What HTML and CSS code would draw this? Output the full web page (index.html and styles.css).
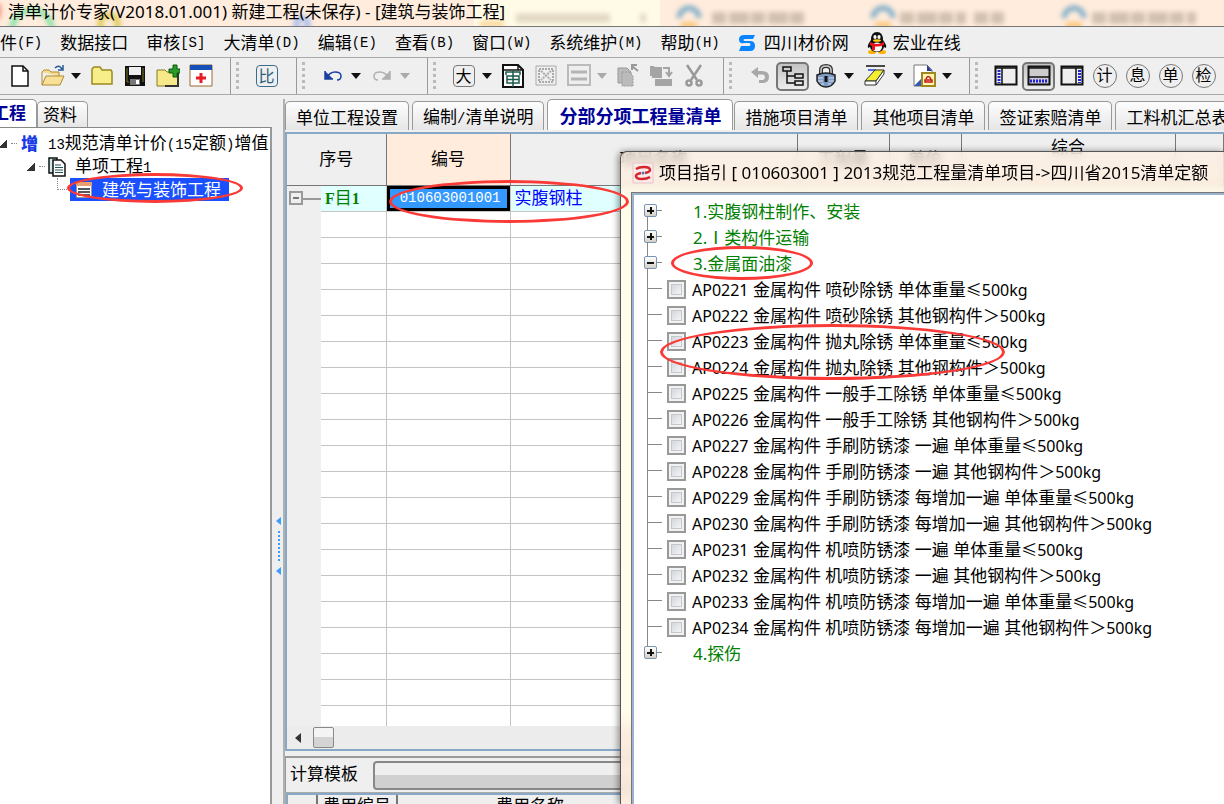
FILE: index.html
```html
<!DOCTYPE html>
<html lang="zh-CN">
<head>
<meta charset="utf-8">
<title>清单计价专家</title>
<link rel="stylesheet" href="styles.css">
</head>
<body>
<div class="app">
  <header class="titlebar">
    <svg class="titlebar-glass" height="26" width="1224" aria-hidden="true">
      <defs><filter id="soft"><feGaussianBlur stdDeviation="2.5"/></filter></defs>
      <rect x="474" width="186" height="26" fill="#fffbe6"/>
      <g filter="url(#soft)" fill="none" stroke-width="5">
        <path d="M-2 4v14" stroke="#f08070"/>
        <path d="M12 30a20 20 0 0 1 40 0" stroke="#7be0a0"/>
        <circle cx="109" cy="24" r="9" stroke="#dcc84a"/>
        <circle cx="302" cy="24" r="6" stroke="#9db9f0"/>
        <path d="M480 24h24" stroke="#fbd08a"/>
        <path d="M516 18h94M640 18h6" stroke="#e2d8c4" stroke-width="9"/>
        <path d="M679 18a10 10 0 0 1 20 0M873 18a10 10 0 0 1 20 0M1064 18a10 10 0 0 1 20 0" stroke="#7bacc8"/>
        <path d="M681 25h16M875 25h16M1066 25h16" stroke="#fbbf68"/>
        <path d="M712 18h92M900 18h66M974 18h30M1092 18h104" stroke="#d2c0b0" stroke-width="12" stroke-dasharray="14 3 20 2"/>
      </g>
    </svg>
    <h1>清单计价专家(V2018.01.001) 新建工程(未保存) - [建筑与装饰工程]</h1>
  </header>

  <nav class="menubar">
    <button>件<span class="mono">(F)</span></button>
    <button>数据接口</button>
    <button>审核<span class="mono">[S]</span></button>
    <button>大清单<span class="mono">(D)</span></button>
    <button>编辑<span class="mono">(E)</span></button>
    <button>查看<span class="mono">(B)</span></button>
    <button>窗口<span class="mono">(W)</span></button>
    <button>系统维护<span class="mono">(M)</span></button>
    <button>帮助<span class="mono">(H)</span></button>
    <button class="site"><svg width="18" height="18" viewBox="0 0 18 18"><path d="M17 1H6Q1 1 1 5.500T6 9h5q1.500 0 1.500 1.500T11 12H3l-2 5h11q5 0 5-5t-5-5H7Q5.500 7 5.500 6T7 5h8z" fill="#0a84ff"/></svg>四川材价网</button>
    <button class="site"><svg width="20" height="22" viewBox="0 0 20 22"><ellipse cx="5" cy="20" rx="4" ry="2" fill="#ffb000"/><ellipse cx="15" cy="20" rx="4" ry="2" fill="#ffb000"/><path d="M4 8Q4 0 10 0t6 8q4 5 3 8l-2-1q-1 5-7 5t-7-5l-2 1Q0 13 4 8z" fill="#111"/><ellipse cx="10" cy="15" rx="5" ry="4.500" fill="#fff"/><ellipse cx="8" cy="5" rx="1.600" ry="2" fill="#fff"/><ellipse cx="12" cy="5" rx="1.600" ry="2" fill="#fff"/><ellipse cx="10" cy="8.500" rx="4" ry="1.300" fill="#ffd000"/><path d="M3 10q7 4 14 0v3q-4 2-9 1.500V18H5v-4l-2-1z" fill="#e8141c"/></svg>宏业在线</button>
  </nav>

  <div class="toolbar" role="toolbar" aria-label="工具栏">
    <div class="group first">
      <button class="tool" aria-label="新建"><svg viewBox="0 0 24 24"><path d="M4 2h11l5 5v15H4z" fill="#fff" stroke="#111" stroke-width="1.500"/><path d="M15 2v5h5" fill="none" stroke="#111" stroke-width="1.500"/></svg></button>
      <button class="tool" aria-label="打开"><svg viewBox="0 0 24 24"><path d="M1 8l2-2h5l2 2h8v4" fill="#f6dc8c" stroke="#b08a30"/><path d="M1 8v13l4-9h18l-4 9H1" fill="#f8e098" stroke="#b08a30"/><path d="M14 4q4-4 7 1m1-4v5h-5" fill="none" stroke="#2a5a98" stroke-width="1.500"/></svg></button>
      <button class="drop" aria-label="打开选项"></button>
      <button class="tool" aria-label="文件夹"><svg viewBox="0 0 24 24"><path d="M2 20V5l2-2h6l2 3h9l1 2v12z" fill="#f7ee8a" stroke="#9a8a20" stroke-width="1.500"/></svg></button>
      <button class="tool" aria-label="保存"><svg viewBox="0 0 24 24"><path d="M2 2h20v20H2z" fill="#111"/><path d="M4 4v14h2M20 4v14" stroke="#7a7a20" fill="none"/><path d="M6 3h12v8H6z" fill="#eee"/><path d="M7 15h10v6H7z" fill="#777"/><path d="M13 16h3v4h-3z" fill="#fff"/></svg></button>
      <button class="tool" aria-label="添加工程"><svg viewBox="0 0 24 24"><path d="M1 6h8l2 2h11v14H1z" fill="#f7e88a" stroke="#8a7a20"/><path d="M22 9v13H9" fill="none" stroke="#333" stroke-width="2"/><path d="M17 1h4v4h3v4h-3v4h-4V9h-4V5h4z" fill="#2a9a2a" stroke="#0a5a0a"/></svg></button>
      <button class="tool" aria-label="导入"><svg viewBox="0 0 24 24"><path d="M1 1h22v21H1z" fill="#fff" stroke="#9a6a2a"/><path d="M1 1h22v5H1z" fill="#1450b8"/><path d="M10.500 9h3v3.500H17v3h-3.500V19h-3v-3.500H7v-3h3.500z" fill="#e81c24"/></svg></button>
    </div>
    <div class="group"><i class="grip"></i>
      <button class="tool" aria-label="比"><span class="boxed blue">比</span></button>
    </div>
    <div class="group"><i class="grip"></i>
      <button class="tool" aria-label="撤销"><svg viewBox="0 0 24 24"><path d="M4 7v8h8z" fill="#1a40a0"/><path d="M4 7v8h8M5 14Q9 8 14 8q6 0 6 4 0 4-4 4" fill="none" stroke="#1a40a0" stroke-width="1.500"/></svg></button>
      <button class="drop" aria-label="撤销选项"></button>
      <button class="tool" aria-label="重做"><svg viewBox="0 0 24 24"><path d="M20 7v8h-8z" fill="#b0b0b0"/><path d="M20 7v8h-8M19 14Q15 8 10 8q-6 0-6 4 0 4 4 4" fill="none" stroke="#b0b0b0" stroke-width="1.500"/></svg></button>
      <button class="drop off" aria-label="重做选项"></button>
    </div>
    <div class="group"><i class="grip"></i>
      <button class="tool" aria-label="大"><span class="boxed">大</span></button>
      <button class="drop" aria-label="大小选项"></button>
      <button class="tool" aria-label="审核"><svg viewBox="0 0 24 24"><path d="M2 1h15l5 5v17H2z" fill="#fff" stroke="#111" stroke-width="2"/><path d="M3 6h18M17 1v5h5" fill="none" stroke="#111" stroke-width="1.500"/><path d="M5 11V8h14v3M6 12h12v7H6zM6 15.500h12M12 7v16" fill="none" stroke="#1a5a4a" stroke-width="1.500"/></svg></button>
      <button class="tool" aria-label="选框"><svg viewBox="0 0 24 24" fill="none" stroke="#aaa"><path d="M2 2h20v19H2z"/><path d="M5 5h14v13H5z" stroke-dasharray="2 1" stroke-width="2"/><path d="M7 7l10 9M17 7L7 16" stroke-dasharray="2 1" stroke-width="2"/></svg></button>
      <button class="tool" aria-label="行"><svg viewBox="0 0 24 24"><path d="M1 1h22v20H1z" fill="#eee" stroke="#bbb" stroke-width="2"/><path d="M4 8h16M4 15h16" stroke="#b4b4b4" stroke-width="3"/></svg></button>
      <button class="drop off" aria-label="行选项"></button>
      <button class="tool" aria-label="复制"><svg viewBox="0 0 24 24" fill="#bbb" stroke="#999"><path d="M2 4h9l4 4v11H2z"/><path d="M6 8h7l4 4v10H6z" stroke-dasharray="2 1"/><path d="M22 7l-6-5m0 4V1h5" fill="none" stroke-width="2"/></svg></button>
      <button class="tool" aria-label="粘贴"><svg viewBox="0 0 24 24"><path d="M1 2h4l1 1h7v9H1zM6 15h17v7H6z" fill="#a4a4a4"/><path d="M14 4h6v7m-3-3l3 4 3-4M3 13h10" fill="none" stroke="#a4a4a4" stroke-width="2"/></svg></button>
      <button class="tool" aria-label="剪切"><svg viewBox="0 0 24 24" fill="none" stroke="#999" stroke-width="2.500"><path d="M5 1l10 15M19 1L9 16"/><circle cx="7" cy="19" r="2.500"/><circle cx="17" cy="19" r="2.500"/></svg></button>
    </div>
    <div class="group"><i class="grip"></i>
      <button class="tool" aria-label="返回"><svg viewBox="0 0 24 24"><path d="M10 3v4h4q7 0 7 6t-7 6h-3v-3h3q3 0 3-3t-3-2.500h-4V14L3 8z" fill="#a8a8a8"/></svg></button>
      <button class="tool pressed" aria-label="树状"><svg viewBox="0 0 24 24" fill="none" stroke="#111" stroke-width="1.500"><path d="M2 3h8v4H2zM14 10h8v4h-8zM14 17h8v4h-8zM6 7v12h8M6 12h8"/></svg></button>
      <button class="tool" aria-label="锁定"><svg viewBox="0 0 24 24"><path d="M7 10V6q0-4 5-4t5 4v4" fill="none" stroke="#333" stroke-width="4"/><path d="M7 10V6q0-4 5-4t5 4v4" fill="none" stroke="#ccc" stroke-width="1.500"/><path d="M3 11q9-4 18 0v6q-3 6-9 6t-9-6z" fill="#7d9cc4" stroke="#222" stroke-width="1.500"/><path d="M4 14h5M15 14h5M4 17h5M15 17h5M7 20h3M14 20h3" stroke="#dde"/><path d="M12 12v6" stroke="#111" stroke-width="3"/></svg></button>
      <button class="drop" aria-label="锁定选项"></button>
      <button class="tool" aria-label="清除"><svg viewBox="0 0 24 24"><path d="M3 2h19" stroke="#111" stroke-width="1.500"/><path d="M5 6h8" stroke="#24c" stroke-width="1.500"/><path d="M12 6h9l-8 11H2z" fill="#f4f030" stroke="#333"/><path d="M2 17h11v4H2zM13 17l8-11v4l-8 11" fill="#fff" stroke="#333"/></svg></button>
      <button class="drop" aria-label="清除选项"></button>
      <button class="tool" aria-label="文档"><svg viewBox="0 0 24 24"><path d="M2 1h13l5 5v16H2z" fill="#fff" stroke="#777"/><path d="M15 1v6h5z" fill="#2a3a9a"/><path d="M2 22l8-8v8z" fill="#345ab0"/><path d="M10 9h13v13H10z" fill="#fff6b0" stroke="#a08820" stroke-width="2"/><path d="M13 18v-2h7v2zM14 15q2-5 5 0" fill="none" stroke="#c01818" stroke-width="1.500"/></svg></button>
      <button class="drop" aria-label="文档选项"></button>
    </div>
    <div class="group last"><i class="grip"></i>
      <button class="tool" aria-label="左侧面板"><svg viewBox="0 0 24 24"><path d="M1.500 2.500h21v18h-21z" fill="#eee" stroke="#111" stroke-width="2"/><path d="M1 4h22M8 4v16" stroke="#111" stroke-width="1.500"/><path d="M5 6v13" stroke="#22d" stroke-width="3" stroke-dasharray="2 1"/></svg></button>
      <button class="tool pressed" aria-label="底部面板"><svg viewBox="0 0 24 24"><path d="M1.500 2.500h21v18h-21z" fill="#ccc" stroke="#111" stroke-width="2"/><path d="M1 4h22M1 13h22" stroke="#111" stroke-width="1.500"/><path d="M3 17h18" stroke="#22d" stroke-width="3" stroke-dasharray="2 1"/></svg></button>
      <button class="tool" aria-label="右侧面板"><svg viewBox="0 0 24 24"><path d="M1.500 2.500h21v18h-21z" fill="#eee" stroke="#111" stroke-width="2"/><path d="M1 4h22M16 4v16" stroke="#111" stroke-width="1.500"/><path d="M19.500 6v13" stroke="#22d" stroke-width="3" stroke-dasharray="2 1"/></svg></button>
      <button class="tool" aria-label="计"><span class="round">计</span></button>
      <button class="tool" aria-label="息"><span class="round">息</span></button>
      <button class="tool" aria-label="单"><span class="round">单</span></button>
      <button class="tool" aria-label="检"><span class="round">检</span></button>
    </div>
  </div>

  <div class="workspace">
    <aside class="side">
      <nav class="tabs side-tabs">
        <button class="tab active">工程</button>
        <button class="tab">资料</button>
      </nav>
      <ul class="project">
        <li class="node level-1"><i class="corner"></i><i class="dots"></i><b class="plus">增</b><span><span class="mono">13</span>规范清单计价<span class="mono">(15</span>定额<span class="mono">)</span>增值</span></li>
        <li class="node level-2"><i class="corner"></i><i class="dots"></i><svg width="18" height="20" viewBox="0 0 18 20"><path d="M1 1h8v15H1z" fill="#cfeaea" stroke="#111" stroke-width="1.500"/><path d="M5 3h8l4 4v12H5z" fill="#fff" stroke="#111" stroke-width="1.500"/><path d="M7 8h6M7 10.500h8M7 13h8M7 15.500h8" stroke="#255"/></svg><span>单项工程<span class="mono">1</span></span></li>
        <li class="node level-3"><i class="elbow"></i><span class="selected"><svg width="16" height="16" viewBox="0 0 16 16"><path d="M0 0h16v16H0z" fill="#fff" stroke="#333"/><path d="M0 0h16v4H0z" fill="#e8a070"/><path d="M2 7h12M2 10h12M2 13h12" stroke="#222" stroke-width="1.500"/></svg>建筑与装饰工程</span></li>
      </ul>
    </aside>
    <div class="splitter"><i class="nib"></i><i class="dotline"></i><i class="nib"></i></div>
    <main class="main">
      <nav class="tabs main-tabs">
        <button class="tab">单位工程设置</button>
        <button class="tab">编制<span class="mono">/</span>清单说明</button>
        <button class="tab active">分部分项工程量清单</button>
        <button class="tab">措施项目清单</button>
        <button class="tab">其他项目清单</button>
        <button class="tab">签证索赔清单</button>
        <button class="tab">工料机汇总表</button>
      </nav>
      <section class="sheet">
        <div class="grid-view">
          <table class="grid">
            <colgroup><col class="c-mark"><col class="c-no"><col class="c-code"><col class="c-name"><col class="c-qty"><col class="c-unit"><col class="c-sum"><col></colgroup>
            <thead>
              <tr><th colspan="2">序号</th><th class="current">编号</th><th class="name-head">项目名称</th><th>工程量</th><th>单位</th><th class="top">综合</th><th></th></tr>
            </thead>
            <tbody>
              <tr class="item"><td class="mark"><button class="fold" aria-label="折叠"></button></td><td class="kind"><b>F</b>目<b>1</b></td><td class="code">010603001001</td><td class="name">实腹钢柱</td><td></td><td></td><td></td><td></td></tr>
              <tr><td></td><td></td><td></td><td colspan="5"></td></tr>
              <tr><td></td><td></td><td></td><td colspan="5"></td></tr>
              <tr><td></td><td></td><td></td><td colspan="5"></td></tr>
              <tr><td></td><td></td><td></td><td colspan="5"></td></tr>
              <tr><td></td><td></td><td></td><td colspan="5"></td></tr>
              <tr><td></td><td></td><td></td><td colspan="5"></td></tr>
              <tr><td></td><td></td><td></td><td colspan="5"></td></tr>
              <tr><td></td><td></td><td></td><td colspan="5"></td></tr>
              <tr><td></td><td></td><td></td><td colspan="5"></td></tr>
              <tr><td></td><td></td><td></td><td colspan="5"></td></tr>
              <tr><td></td><td></td><td></td><td colspan="5"></td></tr>
              <tr><td></td><td></td><td></td><td colspan="5"></td></tr>
              <tr><td></td><td></td><td></td><td colspan="5"></td></tr>
              <tr><td></td><td></td><td></td><td colspan="5"></td></tr>
              <tr><td></td><td></td><td></td><td colspan="5"></td></tr>
              <tr><td></td><td></td><td></td><td colspan="5"></td></tr>
              <tr><td></td><td></td><td></td><td colspan="5"></td></tr>
              <tr><td></td><td></td><td></td><td colspan="5"></td></tr>
              <tr><td></td><td></td><td></td><td colspan="5"></td></tr>
              <tr><td></td><td></td><td></td><td colspan="5"></td></tr>
            </tbody>
          </table>
        </div>
        <div class="scrollbar"><i class="arrow-left"></i><i class="thumb"></i></div>
      </section>
      <section class="template">
        <div class="template-bar">
          <label for="tpl">计算模板</label>
          <select id="tpl"><option></option></select>
        </div>
        <div class="fees">
          <table>
            <colgroup><col class="f-mark"><col class="f-code"><col class="f-name"><col></colgroup>
            <tr><th></th><th>费用编号</th><th>费用名称</th><th></th></tr>
          </table>
        </div>
      </section>
    </main>
  </div>

  <div class="dialog" role="dialog" aria-labelledby="dlg-title">
    <div class="dialog-title">
      <svg width="22" height="22" viewBox="0 0 22 22"><path d="M1 1h20v20H1z" fill="#fbeaea" stroke="#e8c4c4"/><path d="M4 7q3-2 8-2 6 0 6 3 0 2-5 3M18 15q-3 2-8 2-6 0-6-3 0-2 5-3" fill="none" stroke="#d8242c" stroke-width="2.500"/><circle cx="11" cy="11" r="1.500" fill="#3a7ac0"/></svg>
      <h2 id="dlg-title">项目指引 [ 010603001 ] 2013规范工程量清单项目-&gt;四川省2015清单定额</h2>
    </div>
    <div class="dialog-body">
      <ul class="guide">
        <li class="head start"><button class="knob plus" aria-label="展开"></button><span>1.实腹钢柱制作、安装</span></li>
        <li class="head"><button class="knob plus" aria-label="展开"></button><span>2.Ⅰ类构件运输</span></li>
        <li class="head"><button class="knob" aria-label="折叠"></button><span>3.金属面油漆</span></li>
        <li><input type="checkbox" id="q21"><label for="q21"><span class="lat">AP0221</span> 金属构件 喷砂除锈 单体重量<span class="lat">≤500kg</span></label></li>
        <li><input type="checkbox" id="q22"><label for="q22"><span class="lat">AP0222</span> 金属构件 喷砂除锈 其他钢构件＞<span class="lat">500kg</span></label></li>
        <li><input type="checkbox" id="q23"><label for="q23"><span class="lat">AP0223</span> 金属构件 抛丸除锈 单体重量<span class="lat">≤500kg</span></label></li>
        <li><input type="checkbox" id="q24"><label for="q24"><span class="lat">AP0224</span> 金属构件 抛丸除锈 其他钢构件＞<span class="lat">500kg</span></label></li>
        <li><input type="checkbox" id="q25"><label for="q25"><span class="lat">AP0225</span> 金属构件 一般手工除锈 单体重量<span class="lat">≤500kg</span></label></li>
        <li><input type="checkbox" id="q26"><label for="q26"><span class="lat">AP0226</span> 金属构件 一般手工除锈 其他钢构件＞<span class="lat">500kg</span></label></li>
        <li><input type="checkbox" id="q27"><label for="q27"><span class="lat">AP0227</span> 金属构件 手刷防锈漆 一遍 单体重量<span class="lat">≤500kg</span></label></li>
        <li><input type="checkbox" id="q28"><label for="q28"><span class="lat">AP0228</span> 金属构件 手刷防锈漆 一遍 其他钢构件＞<span class="lat">500kg</span></label></li>
        <li><input type="checkbox" id="q29"><label for="q29"><span class="lat">AP0229</span> 金属构件 手刷防锈漆 每增加一遍 单体重量<span class="lat">≤500kg</span></label></li>
        <li><input type="checkbox" id="q30"><label for="q30"><span class="lat">AP0230</span> 金属构件 手刷防锈漆 每增加一遍 其他钢构件＞<span class="lat">500kg</span></label></li>
        <li><input type="checkbox" id="q31"><label for="q31"><span class="lat">AP0231</span> 金属构件 机喷防锈漆 一遍 单体重量<span class="lat">≤500kg</span></label></li>
        <li><input type="checkbox" id="q32"><label for="q32"><span class="lat">AP0232</span> 金属构件 机喷防锈漆 一遍 其他钢构件＞<span class="lat">500kg</span></label></li>
        <li><input type="checkbox" id="q33"><label for="q33"><span class="lat">AP0233</span> 金属构件 机喷防锈漆 每增加一遍 单体重量<span class="lat">≤500kg</span></label></li>
        <li><input type="checkbox" id="q34"><label for="q34"><span class="lat">AP0234</span> 金属构件 机喷防锈漆 每增加一遍 其他钢构件＞<span class="lat">500kg</span></label></li>
        <li class="head end"><button class="knob plus" aria-label="展开"></button><span>4.探伤</span></li>
      </ul>
    </div>
  </div>

  <i class="ring ring-project"></i>
  <i class="ring ring-item"></i>
  <i class="ring ring-paint"></i>
  <i class="ring ring-quota"></i>
</div>
</body>
</html>
```
FILE: styles.css
```css
* { box-sizing: border-box; }

body {
  margin: 0;
  background: #efefef;
  color: #000;
  font: 17px/20px "Noto Sans", "Noto Sans CJK SC", sans-serif;
}

button, select, input {
  margin: 0;
  padding: 0;
  border: 0;
  background: none;
  color: inherit;
  font: inherit;
}

ul { margin: 0; padding: 0; list-style: none; }
h1, h2 { margin: 0; font-size: 17px; font-weight: 400; white-space: nowrap; }
table { border-collapse: collapse; table-layout: fixed; width: 100%; }
i { display: block; flex: none; }

.mono { font-family: "Liberation Mono", monospace; font-size: 14px; }

.app {
  position: relative;
  display: flex;
  flex-direction: column;
  height: 100vh;
  overflow: hidden;
}

/* title bar */
.titlebar {
  position: relative;
  height: 27px;
  padding: 2px 8px;
  overflow: hidden;
  background: #ffecdc;
  border-bottom: 1px solid #777;
}
.titlebar-glass { position: absolute; left: 0; top: 0; }
.titlebar h1 { position: relative; }

/* menu */
.menubar {
  display: flex;
  align-items: center;
  gap: 18px;
  height: 30px;
  padding-top: 2px;
  overflow: hidden;
}
.menubar button { display: flex; align-items: center; flex: none; white-space: nowrap; }
.menubar .site { gap: 8px; }
.menubar .site + .site { gap: 6px; }

/* toolbar */
.toolbar {
  display: flex;
  height: 38px;
  border-top: 1px solid #aaa;
  border-bottom: 1px solid #aaa;
  overflow: hidden;
}
.group {
  display: flex;
  align-items: center;
  flex: none;
  padding: 0 13px 0 5px;
  border-left: 1px solid #999;
}
.group.first { padding-left: 3px; border-left: 0; }
.group.last { padding-right: 0; }
.grip {
  width: 3px;
  height: 28px;
  margin-right: 11px;
  background: repeating-linear-gradient(#bbb 0 3px, transparent 3px 6px);
}
.tool {
  display: flex;
  align-items: center;
  justify-content: center;
  flex: none;
  width: 33px;
  height: 29px;
}
.tool svg { width: 24px; height: 24px; }
.tool.pressed {
  border: 2px solid #777;
  border-radius: 5px;
  background: linear-gradient(#c4c4c4, #ececec);
}
.drop { flex: none; width: 16px; height: 29px; }
.drop::before {
  content: "";
  display: block;
  width: 0;
  margin-left: 2px;
  border: 5px solid transparent;
  border-top: 6px solid #111;
  border-bottom: 0;
}
.drop.off::before { border-top-color: #aaa; }
.boxed, .round {
  width: 22px;
  height: 22px;
  border: 1px solid #777;
  border-radius: 4px;
  font-size: 16px;
  line-height: 20px;
  text-align: center;
}
.boxed.blue { border-color: #3c6c8c; color: #2c5c7c; }
.round { width: 24px; height: 24px; border-radius: 50%; line-height: 21px; }

/* tabs */
.tabs { display: flex; align-items: flex-end; gap: 3px; height: 31px; }
.tab {
  flex: none;
  height: 29px;
  padding: 3px 10px 0;
  border: 1px solid #999;
  border-bottom: 0;
  border-radius: 5px 5px 0 0;
  background: linear-gradient(#fdfdfd, #e6e6e6);
  white-space: nowrap;
}
.tab.active {
  height: 31px;
  background: #fff;
  color: #000099;
  font-weight: 700;
}

.workspace { display: flex; flex: 1; min-height: 0; padding-top: 4px; }

/* project tree */
.side { display: flex; flex-direction: column; width: 272px; overflow: hidden; }
.side-tabs { gap: 0; height: 28px; margin-left: -17px; }
.side-tabs .tab { height: 26px; padding: 0 10px 0 5px; }
.side-tabs .tab.active { height: 28px; padding: 0 10px 2px 8px; }
.project {
  flex: 1;
  padding-top: 4px;
  border-top: 1px solid #888;
  border-right: 2px solid #999;
  background: #fff;
}
.node { display: flex; align-items: center; height: 23px; white-space: nowrap; }
.corner { width: 9px; height: 9px; background: linear-gradient(135deg, transparent 50%, #333 50%); }
.dots { width: 6px; margin: 0 3px 0 4px; border-top: 1px dotted #888; }
.level-1 { margin-left: -2px; }
.level-1 .plus { width: 17px; margin: 0 10px 0 1px; color: #1a3ae8; font-weight: 900; }
.level-2 { padding-left: 26px; }
.level-2 svg { margin-right: 9px; }
.level-3 { padding-left: 57px; }
.elbow { width: 10px; height: 12px; margin: 0 3px 12px 0; border: 1px dotted #888; border-width: 0 0 1px 1px; }
.selected {
  display: flex;
  align-items: center;
  gap: 10px;
  height: 23px;
  padding: 0 8px 0 6px;
  background: #1a50ff;
  color: #fff;
}

/* splitter */
.splitter {
  display: flex;
  flex-direction: column;
  align-items: flex-end;
  justify-content: center;
  gap: 6px;
  width: 11px;
  padding: 188px 2px 0 0;
}
.nib { width: 0; border: 4px solid transparent; border-right: 5px solid #3a9cff; border-left: 0; }
.dotline { width: 2px; height: 30px; margin-right: 1px; background: repeating-linear-gradient(#3a9cff 0 2px, transparent 2px 4px); }

/* main area */
.main {
  display: flex;
  flex: 1;
  flex-direction: column;
  min-width: 0;
  border-left: 2px solid #b0b0b0;
}
.main-tabs { overflow: hidden; }
.main-tabs .active { padding: 2px 11px 0; font-size: 18px; }
.main-tabs .active + .tab { margin-left: -2px; }
.sheet {
  display: flex;
  flex: 1;
  flex-direction: column;
  min-height: 0;
  margin-top: 2px;
  border: 2px solid #88a8c8;
  border-right: 0;
}
.grid-view { flex: 1; min-height: 0; overflow: hidden; background: #fff; }
.c-mark { width: 34px; }
.c-no { width: 65px; }
.c-code { width: 124px; }
.c-name { width: 287px; }
.c-qty { width: 92px; }
.c-unit { width: 72px; }
.c-sum { width: 214px; }
.grid th {
  height: 51px;
  padding: 0;
  border: 1px solid #777;
  border-top: 0;
  border-left: 0;
  background: #efefef;
  font-weight: 400;
}
.grid th.current { background: #ffecdc; }
.grid th.top { padding-top: 3px; vertical-align: top; }
.grid td { height: 26px; padding: 0 4px; border: 1px solid #c4c4c4; border-width: 0 1px 1px 0; }
.grid td:first-child { border: 0; background: #efefef; }
.grid .item td { background: #e0ffff; }
.fold {
  display: block;
  width: 14px;
  height: 14px;
  border: 2px solid #999;
  background: linear-gradient(#777, #777) center / 6px 2px no-repeat;
}
.grid .item .mark {
  padding: 0 0 0 2px;
  background: linear-gradient(#999, #999) 16px 12px / 18px 2px no-repeat #efefef;
}
.grid .kind { color: #008000; }
.kind b { font-family: "Liberation Serif", serif; font-size: 16px; }
.grid .item .code {
  padding: 0 9px 0 5px;
  background: #3399ff;
  box-shadow: inset 0 0 0 3px #000;
  color: #fff;
  font: 14px/20px "Liberation Mono", monospace;
  text-align: right;
}
.grid .name { color: #0000ff; }

.scrollbar { display: flex; align-items: center; height: 23px; padding-left: 8px; background: #ececec; }
.arrow-left { width: 0; border: 5px solid transparent; border-right: 6px solid #333; border-left: 0; }
.thumb { width: 21px; height: 21px; margin-left: 12px; border: 1px solid #888; border-radius: 2px; background: linear-gradient(#f4f4f4 50%, #d4d4d4 50%); }

.template { margin-top: 5px; border-top: 2px solid #999; border-left: 1px solid #999; }
.template-bar { display: flex; align-items: center; gap: 15px; height: 34px; padding-left: 4px; }
.template-bar label { padding-bottom: 2px; }
.template-bar select {
  flex: 1;
  height: 29px;
  border: 2px solid #888;
  border-radius: 4px;
  background: linear-gradient(#efefef 50%, #d0d0d0 50%);
  appearance: none;
}
.fees { height: 11px; margin-top: 1px; overflow: hidden; border: 2px solid #88a8c8; border-width: 2px 0 0 2px; outline: 1px solid #aaa; }
.fees th { padding: 1px 0 0; border-right: 2px solid #777; font-weight: 400; }
.f-mark { width: 29px; }
.f-code { width: 80px; }
.f-name { width: 266px; }

/* guide window */
.dialog {
  position: absolute;
  left: 620px;
  top: 151px;
  right: 0;
  bottom: 0;
  display: flex;
  flex-direction: column;
  padding-left: 11px;
  border: 1px solid #555;
  border-width: 1px 0 0 1px;
  border-radius: 7px 0 0 0;
  background: linear-gradient(rgba(255, 240, 226, .7), rgba(255, 238, 222, .8) 30px, rgba(255, 252, 232, .95) 50px, rgba(255, 252, 232, .95) 560px, rgba(255, 236, 220, .85) 580px);
  backdrop-filter: blur(4px);
  box-shadow: -2px 0 6px rgba(0, 0, 0, .4);
}
.dialog-title { display: flex; align-items: center; gap: 5px; height: 41px; overflow: hidden; }
.dialog-title svg { flex: none; }
.dialog-body {
  flex: 1;
  min-height: 0;
  padding: 4px 0 0 10px;
  border: 2px solid #9ab4d0;
  border-width: 2px 0 0 2px;
  outline: 1px solid #777;
  background: #fff;
}
.guide li {
  display: flex;
  align-items: center;
  height: 26px;
  padding-left: 23px;
  background:
    linear-gradient(#888, #888) 3px 0 / 1px 100% no-repeat,
    linear-gradient(#888, #888) 3px 11px / 15px 1px no-repeat;
  white-space: nowrap;
}
.guide li.head { padding-left: 0; color: #008000; }
.guide li.start { background-position: 3px 12px, 3px 11px; }
.guide li.end { background-size: 1px 12px, 15px 1px; }
.guide label { padding-left: 6px; }
.lat { font-size: 16px; }
.knob {
  width: 13px;
  height: 13px;
  margin: 0 36px 3px 0;
  border: 1px solid #7894b4;
  border-radius: 2px;
  background: linear-gradient(#111, #111) center / 7px 2px no-repeat, linear-gradient(#fff, #d4d0c8);
}
.knob.plus { background: linear-gradient(#111, #111) center / 7px 2px no-repeat, linear-gradient(#111, #111) center / 2px 7px no-repeat, linear-gradient(#fff, #d4d0c8); }
.guide input {
  appearance: none;
  width: 19px;
  height: 19px;
  margin-bottom: 2px;
  border: 2px solid #999;
  background: linear-gradient(135deg, #c8ccd4, #fff);
  box-shadow: inset 0 0 0 2px #f2f2f2, inset 0 0 0 3px #c4c8cc;
}

/* review marks */
.ring { position: absolute; border: 3px solid #f93a37; border-radius: 50%; pointer-events: none; }
.ring-project { left: 67px; top: 173px; width: 176px; height: 30px; }
.ring-item { left: 389px; top: 180px; width: 240px; height: 43px; }
.ring-paint { left: 671px; top: 246px; width: 142px; height: 34px; }
.ring-quota { left: 660px; top: 324px; width: 345px; height: 56px; }
```
